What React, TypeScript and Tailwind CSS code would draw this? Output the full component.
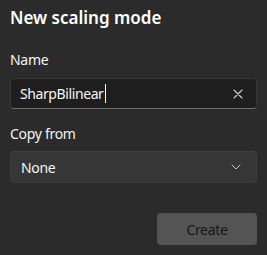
export default function App() {
  return (
    <div className="w-[267px] h-[255px] bg-[#2b2b2b] text-white px-[10px] flex flex-col overflow-hidden font-['Noto_Sans','Open_Sans',sans-serif]">
      <h1 className="mt-[6px] text-[17px] leading-[24px] font-semibold text-white">New scaling mode</h1>

      {/* Name field */}
      <label className="mt-[20px] text-[14px] leading-[20px] tracking-[-0.3px] text-[#f3f3f3]">Name</label>
      <div className="mt-[8px] h-[31px] rounded-[4px] bg-[#1e1e1e] border border-[#393939] border-b-[#6a6a6a] flex items-center pl-[9px] pr-[13px]">
        <span className="text-[14px] tracking-[-0.4px] text-[#f5f5f5]">SharpBilinear</span>
        <span className="w-px h-[19px] bg-white ml-px" />
        <svg className="ml-auto w-[10px] h-[10px]" viewBox="0 0 10 10" fill="none" stroke="#cfcfcf" strokeWidth={1.1} strokeLinecap="round">
          <path d="M1 1 L9 9 M9 1 L1 9" />
        </svg>
      </div>

      {/* Copy from */}
      <label className="mt-[15px] text-[14px] leading-[20px] tracking-[-0.3px] text-[#f3f3f3]">Copy from</label>
      <div className="mt-[7px] h-[32px] rounded-[4px] bg-[#363636] border border-[#3c3c3c] border-t-[#404040] flex items-center pl-[10px] pr-[15px]">
        <span className="text-[14px] tracking-[-0.3px] text-[#f5f5f5]">None</span>
        <svg className="ml-auto w-[10px] h-[6px]" viewBox="0 0 10 6" fill="none" stroke="#c8c8c8" strokeWidth={1} strokeLinecap="round" strokeLinejoin="round">
          <path d="M1 1 L5 5 L9 1" />
        </svg>
      </div>

      <div className="mt-[30px] flex justify-end">
        <button className="w-[100px] h-[32px] rounded-[4px] bg-[#545454] text-[14px] tracking-[-0.3px] text-[#161616]">
          Create
        </button>
      </div>
    </div>
  );
}
